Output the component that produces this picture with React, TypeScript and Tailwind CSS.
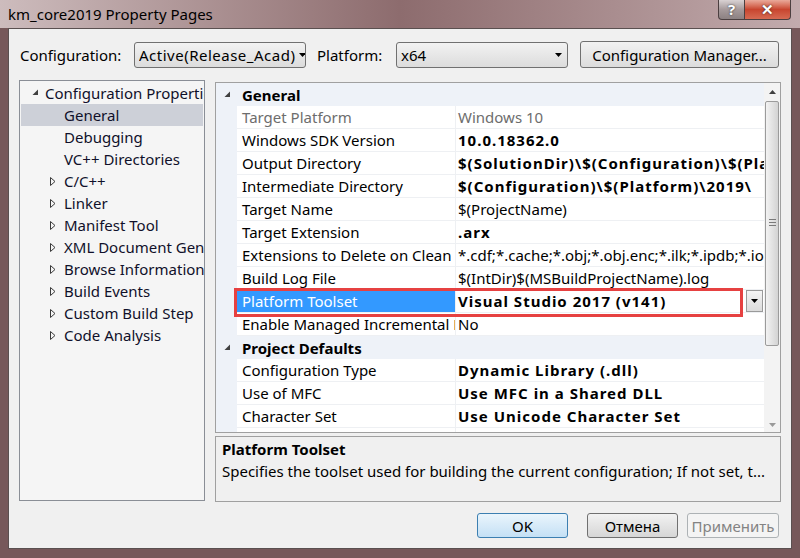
import React from "react";

const FONT = "font-['Noto_Sans',sans-serif]";

function ExpandedArrow() {
  return (
    <svg width="7" height="7" viewBox="0 0 7 7">
      <path d="M6 0.5 L6 6 L0.5 6 Z" fill="#404040" />
    </svg>
  );
}
function CollapsedArrow() {
  return (
    <svg width="6" height="9" viewBox="0 0 6 9">
      <path d="M0.5 0.5 L5 4.5 L0.5 8.5 Z" fill="none" stroke="#3a3a3a" strokeWidth="1" />
    </svg>
  );
}
function DownTri({ color = "#000" }: { color?: string }) {
  return (
    <svg width="7" height="4" viewBox="0 0 7 4">
      <path d="M0 0 H7 L3.5 4 Z" fill={color} />
    </svg>
  );
}
function UpTri({ color = "#404040" }: { color?: string }) {
  return (
    <svg width="7" height="4" viewBox="0 0 7 4">
      <path d="M0 4 H7 L3.5 0 Z" fill={color} />
    </svg>
  );
}

type Row = { name: string; value: string; bold?: boolean; grey?: boolean; selected?: boolean };

const general: Row[] = [
  { name: "Target Platform", value: "Windows 10", grey: true },
  { name: "Windows SDK Version", value: "10.0.18362.0", bold: true },
  { name: "Output Directory", value: "$(SolutionDir)\\$(Configuration)\\$(Platform)\\", bold: true },
  { name: "Intermediate Directory", value: "$(Configuration)\\$(Platform)\\2019\\", bold: true },
  { name: "Target Name", value: "$(ProjectName)" },
  { name: "Target Extension", value: ".arx", bold: true },
  { name: "Extensions to Delete on Clean", value: "*.cdf;*.cache;*.obj;*.obj.enc;*.ilk;*.ipdb;*.iobj;*.resources" },
  { name: "Build Log File", value: "$(IntDir)$(MSBuildProjectName).log" },
  { name: "Platform Toolset", value: "Visual Studio 2017 (v141)", bold: true, selected: true },
  { name: "Enable Managed Incremental Build", value: "No" },
];
const defaults: Row[] = [
  { name: "Configuration Type", value: "Dynamic Library (.dll)", bold: true },
  { name: "Use of MFC", value: "Use MFC in a Shared DLL", bold: true },
  { name: "Character Set", value: "Use Unicode Character Set", bold: true },
];

function Category({ title }: { title: string }) {
  return (
    <div className="flex h-[23px] items-center bg-[#eef2f8]">
      <div className="flex w-[21px] shrink-0 justify-center pl-[1px]">
        <ExpandedArrow />
      </div>
      <div className="pl-[5px] font-bold text-black">{title}</div>
    </div>
  );
}

function PropRow({ r }: { r: Row }) {
  return (
    <div className="flex h-[23px]">
      <div className="w-[21px] shrink-0 bg-[#eef2f8]" />
      <div
        className={
          "flex w-[218px] shrink-0 items-center overflow-hidden whitespace-nowrap border-b border-[#eef0f3] pl-[5px] " +
          (r.selected ? "bg-[#3399ff] text-white" : r.grey ? "text-[#6d6d6d]" : "text-black")
        }
      >
        {r.name}
      </div>
      <div className="w-px shrink-0 bg-[#eef0f3]" />
      <div className="flex min-w-0 flex-1 items-center border-b border-[#eef0f3]">
        <div
          className={
            "min-w-0 flex-1 overflow-hidden whitespace-nowrap pl-[2px] " +
            (r.bold ? "font-bold tracking-[1px] " : "") +
            (r.grey ? "text-[#6d6d6d]" : "text-black")
          }
        >
          {r.value}
        </div>
        {r.selected && (
          <div className="mr-[1px] flex h-[22px] w-[17px] shrink-0 items-center justify-center border border-[#9a9a9a] bg-gradient-to-b from-[#f4f4f4] to-[#dcdcdc]">
            <DownTri />
          </div>
        )}
      </div>
    </div>
  );
}

const treeItems: { label: string; kind: "root" | "leaf" | "collapsed"; selected?: boolean }[] = [
  { label: "Configuration Properties", kind: "root" },
  { label: "General", kind: "leaf", selected: true },
  { label: "Debugging", kind: "leaf" },
  { label: "VC++ Directories", kind: "leaf" },
  { label: "C/C++", kind: "collapsed" },
  { label: "Linker", kind: "collapsed" },
  { label: "Manifest Tool", kind: "collapsed" },
  { label: "XML Document Generator", kind: "collapsed" },
  { label: "Browse Information", kind: "collapsed" },
  { label: "Build Events", kind: "collapsed" },
  { label: "Custom Build Step", kind: "collapsed" },
  { label: "Code Analysis", kind: "collapsed" },
];

export default function App() {
  return (
    <div
      className={
        "flex h-[558px] w-[800px] flex-col overflow-hidden bg-[#76585a] px-[8px] pb-[9px] text-[15px] leading-[20px] text-black " +
        FONT
      }
    >
      {/* Title bar */}
      <div className="-mx-[8px] flex h-[28px] shrink-0 items-start justify-between bg-gradient-to-r from-[#cdbcbd] via-[#8d6c6e] to-[#c2abad] px-[8px]">
        <div className="flex h-[28px] items-center text-[15px] text-black">km_core2019 Property Pages</div>
        <div className="mr-[1px] flex">
          <div className="flex h-[20px] w-[27px] items-center justify-center rounded-bl-[4px] border border-t-0 border-[#4b3f40] bg-gradient-to-b from-[#d9d2d3] via-[#a69a9b] to-[#8c8182] text-[15px] font-bold leading-none text-white [text-shadow:0_0_2px_#222]">
            ?
          </div>
          <div className="flex h-[20px] w-[46px] items-center justify-center rounded-br-[4px] border border-l-0 border-t-0 border-[#4b3f40] bg-gradient-to-b from-[#e9a99a] via-[#c8452f] to-[#d66a52] text-[15px] font-bold leading-none text-white [text-shadow:0_0_2px_#222]">
            ✕
          </div>
        </div>
      </div>

      {/* Client area */}
      <div className="flex flex-1 flex-col border border-[#5a5050] bg-[#f0f0f0]">
        {/* Toolbar */}
        <div className="mt-[12px] flex h-[27px] items-center">
          <div className="ml-[11px] w-[114px] shrink-0">Configuration:</div>
          <div className="relative flex h-[26px] w-[172px] shrink-0 items-center overflow-hidden rounded-[3px] border border-[#707070] bg-gradient-to-b from-[#f2f2f2] to-[#dcdcdc] pl-[4px]">
            <div className="w-[158px] shrink-0 overflow-hidden whitespace-nowrap tracking-[0.5px]">Active(Release_Acad)</div>
            <div className="flex w-[10px] shrink-0 justify-center">
              <DownTri />
            </div>
          </div>
          <div className="ml-[11px] w-[79px] shrink-0">Platform:</div>
          <div className="flex h-[26px] w-[172px] shrink-0 items-center rounded-[3px] border border-[#707070] bg-gradient-to-b from-[#f2f2f2] to-[#dcdcdc] pl-[4px]">
            <div className="min-w-0 flex-1 overflow-hidden whitespace-nowrap">x64</div>
            <div className="flex w-[18px] justify-center">
              <DownTri />
            </div>
          </div>
          <div className="ml-[12px] flex h-[27px] w-[199px] shrink-0 items-center justify-center rounded-[3px] border border-[#707070] bg-gradient-to-b from-[#f2f2f2] to-[#dcdcdc]">
            Configuration Manager...
          </div>
        </div>

        {/* Main */}
        <div className="mt-[12px] flex pl-[10px]">
          {/* Tree */}
          <div className="h-[421px] w-[186px] shrink-0 overflow-hidden border border-[#8a8e96] bg-[#f5f5f5] pt-[1px]">
            {treeItems.map((t) => (
              <div
                key={t.label}
                className={
                  "mx-[1px] flex h-[22px] items-center whitespace-nowrap text-[#10102a] " +
                  (t.selected ? "bg-[#cdd0d8]" : "")
                }
              >
                {t.kind === "root" ? (
                  <>
                    <div className="flex w-[24px] shrink-0 justify-end pb-[2px] pr-[6px]">
                      <ExpandedArrow />
                    </div>
                    <span className="shrink-0">{t.label}</span>
                  </>
                ) : (
                  <>
                    <div className="flex w-[43px] shrink-0 justify-end pr-[8px]">
                      {t.kind === "collapsed" && <CollapsedArrow />}
                    </div>
                    <span className="shrink-0">{t.label}</span>
                  </>
                )}
              </div>
            ))}
          </div>

          {/* Right column */}
          <div className="ml-[10px] flex w-[566px] flex-col">
            <div className="relative mt-[2px] flex h-[351px] border border-[#a0a0a0] bg-white">
              <div className="min-w-0 flex-1 overflow-hidden">
                <Category title="General" />
                {general.map((r) => (
                  <PropRow key={r.name} r={r} />
                ))}
                <Category title="Project Defaults" />
                {defaults.map((r) => (
                  <PropRow key={r.name} r={r} />
                ))}
                <div className="flex h-[23px]">
                  <div className="w-[21px] bg-[#eef2f8]" />
                  <div className="w-[218px]" />
                  <div className="w-px bg-[#eef0f3]" />
                </div>
              </div>
              {/* Scrollbar */}
              <div className="flex w-[16px] shrink-0 flex-col bg-[#f3f3f3]">
                <div className="flex h-[18px] items-center justify-center">
                  <UpTri />
                </div>
                <div className="relative mx-[1px] h-[245px] rounded-[2px] border border-[#9b9b9b] bg-gradient-to-r from-[#f3f3f3] to-[#d3d3d3]">
                  <div className="absolute left-[3px] top-[117px] flex w-[7px] flex-col gap-[2px]">
                    <div className="h-px bg-[#7a7a7a]" />
                    <div className="h-px bg-[#7a7a7a]" />
                    <div className="h-px bg-[#7a7a7a]" />
                  </div>
                </div>
                <div className="flex-1" />
                <div className="flex h-[14px] items-center justify-center">
                  <DownTri color="#9a9a9a" />
                </div>
              </div>
              {/* Red highlight */}
              <div className="pointer-events-none absolute left-[18px] top-[205px] h-[29px] w-[509px] border-[3px] border-[#e64141]" />
            </div>

            {/* Description */}
            <div className="mt-[3px] h-[66px] border border-[#a0a0a0] bg-[#f0f0f0] pl-[6px] pt-[1px] leading-[22px]">
              <div className="font-bold">Platform Toolset</div>
              <div className="whitespace-nowrap">
                Specifies the toolset used for building the current configuration; If not set, t...
              </div>
            </div>
          </div>
        </div>

        {/* Buttons */}
        <div className="mt-[11px] flex justify-end pr-[12px]">
          <div className="flex h-[25px] w-[91px] items-center justify-center rounded-[3px] border border-[#3c7fb1] bg-gradient-to-b from-[#eaf5fc] to-[#c4e0f5]">
            OK
          </div>
          <div className="ml-[19px] flex h-[25px] w-[91px] items-center justify-center rounded-[3px] border border-[#707070] bg-gradient-to-b from-[#f2f2f2] to-[#d6d6d6]">
            Отмена
          </div>
          <div className="ml-[9px] flex h-[25px] w-[92px] items-center justify-center rounded-[3px] border border-[#adb2b5] bg-[#f4f4f4] text-[#838383]">
            Применить
          </div>
        </div>
      </div>
    </div>
  );
}
